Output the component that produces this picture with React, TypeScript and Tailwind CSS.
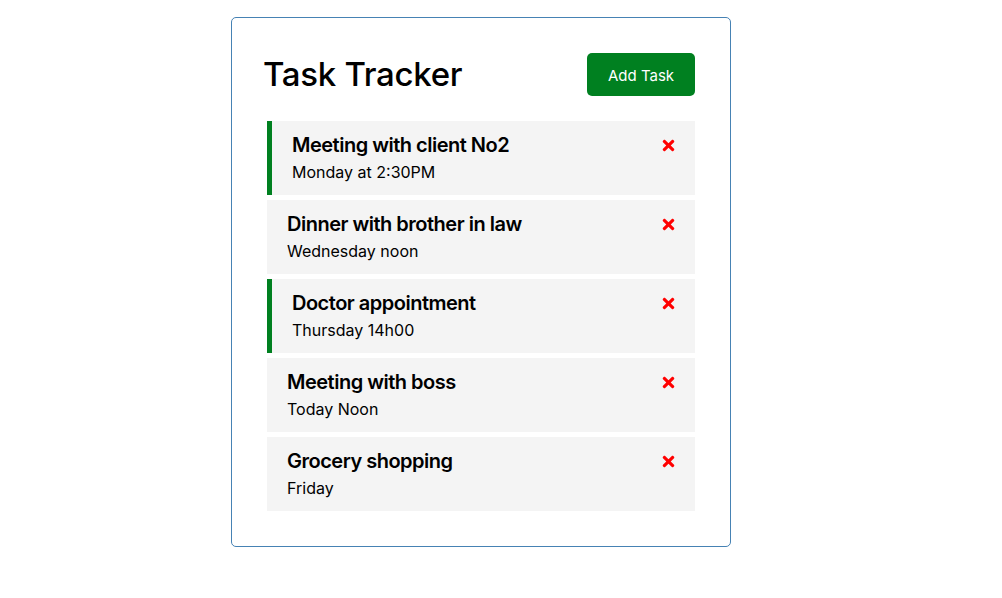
import { FaTimes } from "react-icons/fa";

type Task = { id: number; text: string; day: string; reminder: boolean };

const tasks: Task[] = [
    { id: 1, text: "Meeting with client No2", day: "Monday at 2:30PM", reminder: true },
    { id: 2, text: "Dinner with brother in law", day: "Wednesday noon", reminder: false },
    { id: 3, text: "Doctor appointment", day: "Thursday 14h00", reminder: true },
    { id: 4, text: "Meeting with boss", day: "Today Noon", reminder: false },
    { id: 5, text: "Grocery shopping", day: "Friday", reminder: false },
];

function TaskItem({ task }: { task: Task }) {
    return (
        <div
            className={`flex h-[74px] justify-between bg-[#f4f4f4] pt-[10px] pr-[18px] ${
                task.reminder ? "border-l-[5px] border-[#008020] pl-[20px]" : "pl-[20px]"
            }`}
        >
            <div>
                <h3 className="text-[20px] leading-[28px] font-semibold tracking-[-0.5px] text-black">{task.text}</h3>
                <p className="mt-[1px] text-[16px] leading-[24px] text-black">{task.day}</p>
            </div>
            <div className="flex h-[28px] items-center">
                <FaTimes className="h-[17px] w-[17px] text-[#ff0000]" />
            </div>
        </div>
    );
}

export default function App() {
    return (
        <div className="min-h-screen bg-white font-['Inter','Liberation_Sans',sans-serif]">
            <div className="h-[17px]" />
            <div className="ml-[231px] h-[530px] w-[500px] rounded-[5px] border border-[#4682b4] pt-[35px] pr-[35px] pl-[31px]">
                <header className="mb-[25px] flex h-[43px] items-center justify-between">
                    <h1 className="text-[33px] leading-none font-medium tracking-[-0.3px] text-black">Task Tracker</h1>
                    <button className="h-[43px] w-[108px] rounded-[5px] bg-[#008020] pt-[3px] text-[15px] text-white">Add Task</button>
                </header>
                <div className="ml-[4px] flex flex-col gap-[5px]">
                    {tasks.map((t) => (
                        <TaskItem key={t.id} task={t} />
                    ))}
                </div>
            </div>
        </div>
    );
}
